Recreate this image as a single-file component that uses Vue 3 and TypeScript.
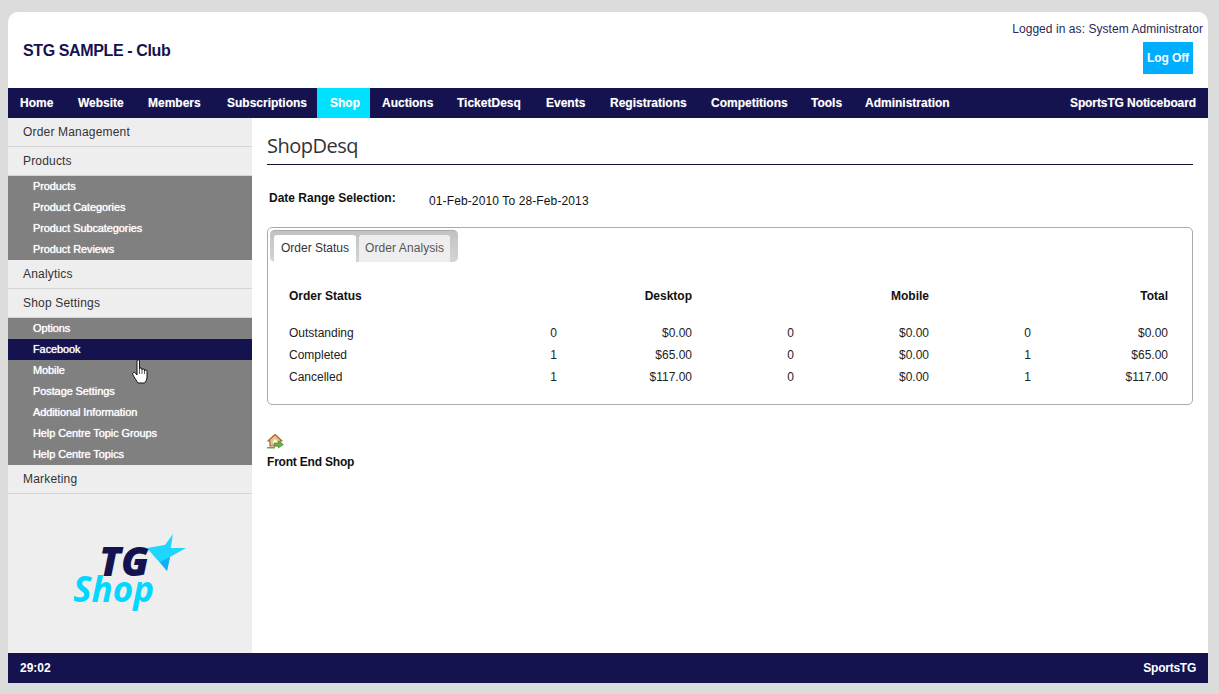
<script setup lang="ts">
interface NavItem { label: string; width: number }
const nav: NavItem[] = [
  { label: 'Home', width: 58 },
  { label: 'Website', width: 70 },
  { label: 'Members', width: 79 },
  { label: 'Subscriptions', width: 102 },
  { label: 'Shop', width: 53 },
  { label: 'Auctions', width: 75 },
  { label: 'TicketDesq', width: 89 },
  { label: 'Events', width: 64 },
  { label: 'Registrations', width: 101 },
  { label: 'Competitions', width: 100 },
  { label: 'Tools', width: 54 },
  { label: 'Administration', width: 108 },
]
interface Group { label: string; subs: string[] }
const groups: Group[] = [
  { label: 'Order Management', subs: [] },
  { label: 'Products', subs: ['Products','Product Categories','Product Subcategories','Product Reviews'] },
  { label: 'Analytics', subs: [] },
  { label: 'Shop Settings', subs: ['Options','Facebook','Mobile','Postage Settings','Additional Information','Help Centre Topic Groups','Help Centre Topics'] },
  { label: 'Marketing', subs: [] },
]
const rows = [
  ['Outstanding','0','$0.00','0','$0.00','0','$0.00'],
  ['Completed','1','$65.00','0','$0.00','1','$65.00'],
  ['Cancelled','1','$117.00','0','$0.00','1','$117.00'],
]
</script>

<template>
  <div class="page">
    <div class="shell">
      <header class="top">
        <div class="club">STG SAMPLE - Club</div>
        <div class="user">
          <div class="logged">Logged in as: System Administrator</div>
          <a class="logoff">Log Off</a>
        </div>
      </header>
      <nav class="nav">
        <a v-for="n in nav" :key="n.label" class="nav-item" :class="{ on: n.label === 'Shop' }" :style="{ width: n.width + 'px' }">{{ n.label }}</a>
        <a class="nav-item board">SportsTG Noticeboard</a>
      </nav>
      <div class="body">
        <aside class="side">
          <template v-for="g in groups" :key="g.label">
            <div class="group">{{ g.label }}</div>
            <div v-if="g.subs.length" class="subs">
              <div v-for="s in g.subs" :key="s" class="sub" :class="{ on: s === 'Facebook' }">{{ s }}</div>
            </div>
          </template>
          <div class="logo">
            <svg width="116" height="86" viewBox="0 0 116 86">
              <polygon points="73,18 91,15 99,4 96.7,18 112,18 96,27 93,41" fill="#1fd6ff"/>
              <polygon points="86,32 96,27 93,41" fill="#12aef5"/>
              <text x="25" y="46" class="tg">TG</text>
              <text x="-1" y="72" class="shop">Shop</text>
            </svg>
          </div>
        </aside>
        <main class="main">
          <h1 class="title">ShopDesq</h1>
          <div class="range">
            <span class="range-label">Date Range Selection:</span>
            <span class="range-value">01-Feb-2010 To 28-Feb-2013</span>
          </div>
          <section class="box">
            <div class="tabs">
              <span class="tab active">Order Status</span>
              <span class="tab">Order Analysis</span>
            </div>
            <table class="grid">
              <colgroup>
                <col class="c0" /><col class="c1" /><col class="c2" /><col class="c3" /><col class="c2" /><col class="c3" /><col class="c4" />
              </colgroup>
              <thead>
                <tr>
                  <th class="l">Order Status</th>
                  <th colspan="2">Desktop</th>
                  <th colspan="2">Mobile</th>
                  <th colspan="2">Total</th>
                </tr>
              </thead>
              <tbody>
                <tr v-for="r in rows" :key="r[0]">
                  <td v-for="(c, i) in r" :key="i" :class="{ l: i === 0 }">{{ c }}</td>
                </tr>
              </tbody>
            </table>
          </section>
          <div class="front">
            <svg width="17" height="16" viewBox="0 0 17 16">
              <path d="M1 8 L8 1.5 L15 8 L13 8 L13 13 L3 13 L3 8 Z" fill="#e8c48c" stroke="#a5672c" stroke-width="1.2" stroke-linejoin="round"/>
              <path d="M6 8 L8 6 L10 8 L10 11 L6 11 Z" fill="#fff6e0"/>
              <path d="M0 14 H8 V15.5 H0 Z" fill="#6aa84f"/>
              <path d="M7 10 H11.5 V8 L16.5 11.5 L11.5 15 V13 H7 Z" fill="#63b34a" stroke="#3f8a2e" stroke-width="0.6"/>
            </svg>
            <div class="front-label">Front End Shop</div>
          </div>
        </main>
      </div>
      <footer class="foot">
        <span>29:02</span>
        <span class="foot-right">SportsTG</span>
      </footer>
    </div>
    <svg class="cursor" width="18" height="25" viewBox="0 0 18 25">
      <path d="M5 2 C5 0.5 7.5 0.5 7.5 2 V10 C7.5 8.5 10 8.5 10 10 V11 C10 9.5 12.5 9.5 12.5 11 V12 C12.5 10.5 15 10.5 15 12 V18 C15 21 13.5 23 12.5 24 H6 C5 22.5 2 18 1 16 C0 14 2 12.5 3.5 14 L5 16 Z" fill="#fff" stroke="#111" stroke-width="1" stroke-linejoin="round"/>
      <path d="M7.5 10 V15 M10 11 V15 M12.5 12 V15" stroke="#333" stroke-width="0.8" fill="none"/>
    </svg>
  </div>
</template>

<style scoped>
.page {
  position: relative;
  height: 694px;
  box-sizing: border-box;
  padding: 12px 11px 11px 8px;
  background: #dcdcdc;
  font-family: "Liberation Sans", Arial, sans-serif;
  font-size: 12px;
  color: #111;
  overflow: hidden;
}
.shell {
  height: 671px;
  display: flex;
  flex-direction: column;
  background: #fff;
  border-radius: 10px 10px 0 0;
  overflow: hidden;
}
.top {
  height: 76px;
  flex: none;
  display: flex;
  justify-content: space-between;
  padding: 0 5px 0 15px;
}
.club {
  font-size: 16px;
  font-weight: 700;
  letter-spacing: -.38px;
  color: #14134f;
  margin-top: 30px;
  line-height: 18px;
}
.user {
  display: flex;
  flex-direction: column;
  align-items: flex-end;
  padding-top: 10px;
}
.logged {
  color: #2a2857;
  line-height: 14px;
  letter-spacing: .06px;
}
.logoff {
  margin: 6px 10px 0 0;
  width: 50px;
  height: 32px;
  background: #00aeff;
  color: #fff;
  font-weight: 700;
  line-height: 33px;
  text-align: center;
  letter-spacing: -.1px;
}
.nav {
  height: 30px;
  flex: none;
  display: flex;
  background: #14134f;
}
.nav-item {
  box-sizing: border-box;
  flex: none;
  padding-left: 12px;
  color: #fff;
  font-weight: 700;
  line-height: 30px;
  white-space: nowrap;
  text-shadow: 0 0 1px rgba(255,255,255,.4);
}
.nav-item.on {
  background: #00e1ff;
  padding-left: 13px;
}
.board {
  margin-left: auto;
  padding: 0 12px;
  letter-spacing: -.1px;
}
.body {
  flex: 1;
  display: flex;
  min-height: 0;
}
.side {
  width: 244px;
  flex: none;
  background: #eee;
}
.group {
  height: 29px;
  box-sizing: border-box;
  padding-left: 15px;
  line-height: 28px;
  color: #333;
  font-size: 12px;
  letter-spacing: .18px;
  border-bottom: 1px solid #d4d4d4;
}
.subs {
  background: #808080;
}
.sub {
  height: 21px;
  padding-left: 25px;
  color: #fff;
  font-size: 11px;
  font-weight: 400;
  line-height: 21px;
  letter-spacing: -.1px;
  text-shadow: 0 0 1px #fff;
}
.sub.on {
  background: #14134f;
}
.logo {
  padding: 36px 0 0 66px;
}
.tg {
  font-family: "Open Sans", sans-serif;
  font-size: 40px;
  font-weight: 800;
  font-style: italic;
  fill: #14134f;
}
.shop {
  font-family: "Open Sans", sans-serif;
  font-size: 35px;
  font-weight: 700;
  font-style: italic;
  fill: #00d8ff;
}
.main {
  flex: 1;
  padding: 0 15px;
  min-width: 0;
}
.title {
  margin: 0;
  height: 47px;
  box-sizing: border-box;
  border-bottom: 1px solid #111133;
  font-family: "Open Sans", sans-serif;
  font-size: 20px;
  font-weight: 400;
  letter-spacing: -.5px;
  color: #333;
  line-height: 56px;
}
.range {
  display: flex;
  height: 62px;
  padding-left: 2px;
}
.range-label {
  font-weight: 700;
  width: 160px;
  margin-top: 26px;
  line-height: 14px;
}
.range-value {
  margin-top: 29px;
  line-height: 14px;
  letter-spacing: .12px;
}
.box {
  height: 178px;
  box-sizing: border-box;
  border: 1px solid #aaa;
  border-radius: 5px;
  padding: 2px;
}
.tabs {
  display: flex;
  width: 188px;
  gap: 3px;
  height: 32px;
  box-sizing: border-box;
  padding: 4px 8px 0 4px;
  background: linear-gradient(#c2c2c2, #d4d4d4);
  border-radius: 5px;
  border-top: 1px solid #aaa;
}
.tab {
  flex: none;
  height: 27px;
  box-sizing: border-box;
  padding: 0 6px;
  background: #eee;
  color: #555;
  line-height: 27px;
  white-space: nowrap;
  border-radius: 3px 3px 0 0;
  letter-spacing: .08px;
}
.tab.active {
  width: 82px;
  padding: 0 7px;
  background: #fff;
  color: #333;
  letter-spacing: 0;
}
.grid {
  margin: 19px 0 0 19px;
  width: 879px;
  table-layout: fixed;
  border-collapse: collapse;
}
.c0 { width: 200px; }
.c1 { width: 68px; }
.c2 { width: 135px; }
.c3 { width: 102px; }
.c4 { width: 137px; }
.grid th, .grid td {
  padding: 0;
  text-align: right;
  font-size: 12px;
}
.grid th {
  height: 30px;
  padding-bottom: 11px;
  color: #111;
}
.grid td {
  height: 22px;
  color: #222;
}
.grid .l {
  text-align: left;
}
.front {
  margin-top: 28px;
}
.front svg {
  display: block;
}
.front-label {
  margin-top: 6px;
  font-weight: 700;
  line-height: 14px;
  letter-spacing: -.2px;
}
.foot {
  height: 30px;
  flex: none;
  display: flex;
  justify-content: space-between;
  padding: 0 12px;
  background: #14134f;
  color: #fff;
  font-weight: 700;
  line-height: 30px;
}
.foot-right {
  letter-spacing: -.25px;
}
.cursor {
  position: absolute;
  left: 132px;
  top: 359px;
}
</style>
